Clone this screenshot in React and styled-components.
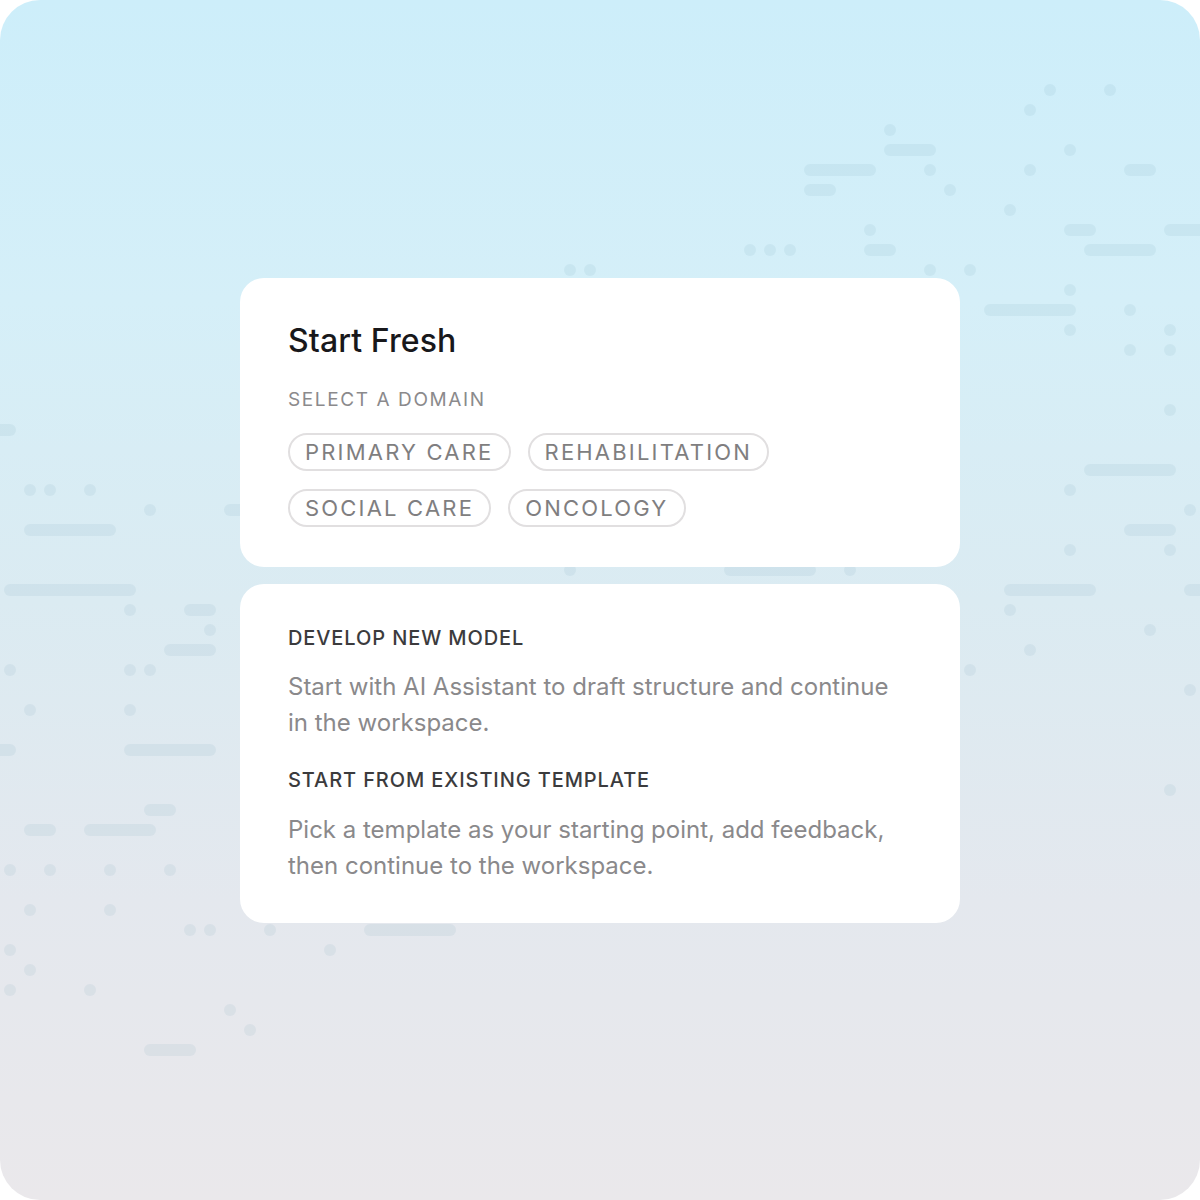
import React from "react";
import styled, { createGlobalStyle } from "styled-components";

const GlobalStyle = createGlobalStyle`
  html, body {
    margin: 0;
    padding: 0;
    background: #ffffff;
  }
  body {
    font-family: Inter, "Noto Sans", "Liberation Sans", sans-serif;
    -webkit-font-smoothing: antialiased;
  }
`;

const Frame = styled.div`
  position: relative;
  width: 1200px;
  height: 1200px;
  border-radius: 40px;
  overflow: hidden;
  background: linear-gradient(
    180deg,
    #cdeefa 0%,
    #d5eff8 25%,
    #dbebf2 50%,
    #e4e8ee 75%,
    #eae8eb 100%
  );
  display: flex;
  flex-direction: column;
  align-items: center;
  justify-content: center;
  gap: 17px;
`;

const Pattern = styled.svg`
  position: absolute;
  inset: 0;
  pointer-events: none;
`;

const Card = styled.section`
  position: relative;
  width: 720px;
  box-sizing: border-box;
  background: #ffffff;
  border-radius: 24px;
  padding: ${(p) => p.$pad};
`;

const Title = styled.h1`
  margin: 0;
  font-size: 32px;
  line-height: 38px;
  font-weight: 500;
  color: #18181b;
  letter-spacing: 0.1px;
`;

const Label = styled.div`
  margin-top: ${(p) => p.$top || 0}px;
  font-size: ${(p) => (p.$dark ? 20 : 19)}px;
  line-height: 24px;
  letter-spacing: ${(p) => (p.$dark ? "0.9px" : "1.6px")};
  text-transform: uppercase;
  font-weight: ${(p) => (p.$dark ? 500 : 400)};
  color: ${(p) => (p.$dark ? "#3b3b3d" : "#8b8a8c")};
`;

const Chips = styled.div`
  display: flex;
  flex-wrap: wrap;
  gap: 18px 17px;
  margin-top: 21px;
  max-width: 520px;
`;

const Chip = styled.button`
  height: 38px;
  box-sizing: border-box;
  padding: 0 15px;
  border: 2px solid #e1dfe0;
  border-radius: 999px;
  background: #ffffff;
  font-family: inherit;
  font-size: 22px;
  letter-spacing: 2.2px;
  text-transform: uppercase;
  color: #807e80;
  display: flex;
  align-items: center;
  cursor: pointer;
`;

const Text = styled.p`
  margin: ${(p) => p.$top || 0}px 0 0;
  font-size: 24px;
  line-height: 36px;
  color: #8a898b;
`;

// [row, firstCol, lastCol] on a 20px grid, pills 12px thick
const marks = [
  [4, 52, 52], [4, 55, 55], [5, 51, 51], [6, 44, 44], [7, 44, 46], [7, 53, 53],
  [8, 40, 43], [8, 46, 46], [8, 51, 51], [8, 56, 57], [9, 40, 41], [9, 47, 47],
  [10, 50, 50], [11, 43, 43], [11, 53, 54], [11, 58, 60], [12, 37, 37],
  [12, 38, 38], [12, 39, 39], [12, 43, 44], [12, 54, 57], [13, 28, 28],
  [13, 29, 29], [13, 46, 46], [13, 48, 48], [14, 53, 53], [15, 49, 53],
  [15, 56, 56], [16, 53, 53], [16, 58, 58], [17, 56, 56], [17, 58, 58],
  [20, 58, 58], [23, 54, 58], [24, 53, 53], [25, 59, 59], [26, 56, 58],
  [27, 53, 53], [27, 58, 58], [29, 50, 54], [29, 59, 60], [30, 50, 50],
  [31, 57, 57], [32, 51, 51], [33, 48, 48], [34, 59, 59], [39, 58, 58],
  [21, -1, 0], [24, 1, 1], [24, 2, 2], [24, 4, 4], [25, 7, 7], [25, 11, 13],
  [26, 1, 5], [29, 0, 6], [30, 6, 6], [30, 9, 10], [31, 10, 10], [32, 8, 10],
  [33, 0, 0], [33, 6, 6], [33, 7, 7], [35, 1, 1], [35, 6, 6], [37, -1, 0],
  [37, 6, 10], [40, 7, 8], [41, 1, 2], [41, 4, 7], [43, 0, 0], [43, 2, 2],
  [43, 5, 5], [43, 8, 8], [45, 1, 1], [45, 5, 5], [46, 9, 9], [46, 10, 10],
  [46, 13, 13], [46, 18, 22], [47, 0, 0], [47, 16, 16], [48, 1, 1], [49, 0, 0],
  [49, 4, 4], [50, 11, 11], [51, 12, 12], [52, 7, 9],
  [28, 28, 28], [28, 36, 40], [28, 42, 42],
];

function DotField() {
  return (
    <Pattern width="1200" height="1200" viewBox="0 0 1200 1200">
      {marks.map(([r, a, b], i) => (
        <rect
          key={i}
          x={20 * a + 4}
          y={20 * r + 4}
          width={20 * (b - a) + 12}
          height={12}
          rx={6}
          fill="rgba(90,140,165,0.09)"
        />
      ))}
    </Pattern>
  );
}

const domains = ["Primary Care", "Rehabilitation", "Social Care", "Oncology"];

export default function App() {
  return (
    <>
      <GlobalStyle />
      <Frame>
        <DotField />
        <Card $pad="44px 48px 40px">
          <Title>Start Fresh</Title>
          <Label $top={28}>Select a domain</Label>
          <Chips>
            {domains.map((d) => (
              <Chip key={d}>{d}</Chip>
            ))}
          </Chips>
        </Card>
        <Card $pad="42px 48px 39px">
          <Label $dark>Develop new model</Label>
          <Text $top={19}>
            Start with AI Assistant to draft structure and continue in the
            workspace.
          </Text>
          <Label $dark $top={27}>
            Start from existing template
          </Label>
          <Text $top={20}>
            Pick a template as your starting point, add feedback, then continue
            to the workspace.
          </Text>
        </Card>
      </Frame>
    </>
  );
}
